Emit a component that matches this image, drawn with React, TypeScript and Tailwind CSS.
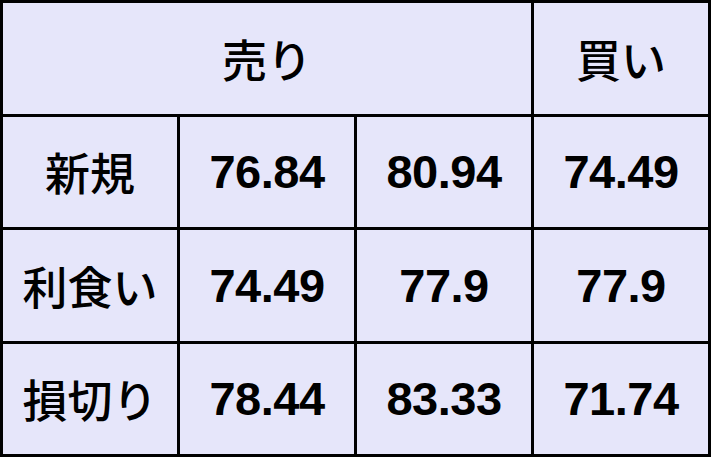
import React from 'react'

const rows: {label: string, values: string[]}[] = [
  {label: '新規', values: ['76.84', '80.94', '74.49']},
  {label: '利食い', values: ['74.49', '77.9', '77.9']},
  {label: '損切り', values: ['78.44', '83.33', '71.74']},
]

const jp = "font-['Noto_Sans_CJK_JP',sans-serif] text-[45px] font-medium text-black"
const num = "font-['Liberation_Sans',Arial,sans-serif] text-[47px] tracking-[-0.5px] font-bold text-black"

export default function App(){
  return (
    <div className="h-[457px] w-[712px] bg-white">
      <div className="grid h-[457px] w-[711px] grid-cols-4 grid-rows-4 gap-[3px] bg-black p-[3px]">
        <div className={`col-span-3 flex items-center justify-center bg-[#e6e6fa] leading-none ${jp}`}>売り</div>
        <div className={`flex items-center justify-center bg-[#e6e6fa] leading-none ${jp}`}>買い</div>
        {rows.map(row=>(
          <React.Fragment key={row.label}>
            <div className={`flex items-center justify-center bg-[#e6e6fa] leading-none ${jp}`}>{row.label}</div>
            {row.values.map((v,i)=>(
              <div key={i} className={`flex items-center justify-center bg-[#e6e6fa] leading-none ${num}`}>{v}</div>
            ))}
          </React.Fragment>
        ))}
      </div>
    </div>
  )
}
